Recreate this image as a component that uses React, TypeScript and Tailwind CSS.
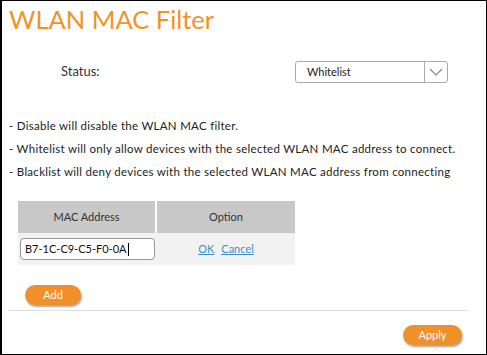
const FONT = "font-['Century_Gothic','Lato','Liberation_Sans',sans-serif]";

export default function App() {
  return (
    <div className={`w-[487px] h-[355px] bg-white border border-black border-l-2 relative overflow-hidden ${FONT}`}>
      <h1 className="pl-[7px] pt-[2px] text-[25.5px] leading-[32px] text-[#f29327]">WLAN MAC Filter</h1>

      {/* Status */}
      <div className="flex items-center mt-[26px] h-[22px]">
        <span className="ml-[59px] text-[13px] text-[#333]">Status:</span>
        <div className="ml-auto mr-[38px] w-[153px] h-[22px] flex border border-[#aaa] rounded-[3px] bg-white">
          <span className="flex-1 pl-[11px] text-[11px] leading-[20px] text-[#222]">Whitelist</span>
          <div className="w-[23px] border-l border-[#aaa] flex items-center justify-center">
            <svg width="14" height="8" viewBox="0 0 14 8" fill="none" stroke="#888" strokeWidth="1.2">
              <path d="M1 1l6 6 6-6" />
            </svg>
          </div>
        </div>
      </div>

      {/* Help text */}
      <div className="mt-[34px] pl-[7px] text-[11.5px] tracking-[0.28px] text-[#222] flex flex-col gap-[6px] leading-[17px]">
        <p>- Disable will disable the WLAN MAC filter.</p>
        <p>- Whitelist will only allow devices with the selected WLAN MAC address to connect.</p>
        <p>- Blacklist will deny devices with the selected WLAN MAC address from connecting</p>
      </div>

      {/* Table */}
      <div className="ml-[16px] mt-[21px] w-[277px]">
        <div className="flex h-[32px] bg-[#c8c8c8] text-[11px] text-[#333]">
          <div className="w-[139px] flex items-center justify-center border-r-2 border-white">MAC Address</div>
          <div className="flex-1 flex items-center justify-center">Option</div>
        </div>
        <div className="flex h-[32px] bg-[#f2f2f2] items-center">
          <div className="w-[139px] pl-[2px]">
            <div className="w-[135px] h-[22px] border border-[#999] rounded-[4px] bg-white pl-[4px] text-[11px] leading-[20px] text-[#111] flex items-center">
              B7-1C-C9-C5-F0-0A<span className="w-px h-[13px] bg-black ml-px" />
            </div>
          </div>
          <div className="flex-1 flex justify-center gap-[7px] text-[11px] text-[#3b8fc6] underline">
            <span>OK</span>
            <span>Cancel</span>
          </div>
        </div>
      </div>

      <div className="ml-[23px] mt-[16px]">
        <button className="w-[56px] h-[20px] rounded-full bg-[#f09029] text-white text-[11px] shadow-[1px_2px_2px_rgba(0,0,0,0.35)]">Add</button>
      </div>

      <div className="ml-[7px] mr-[18px] mt-[5px] border-t border-[#ddd]" />

      <div className="flex justify-end mr-[24px] mt-[14px]">
        <button className="w-[59px] h-[20px] rounded-full bg-[#f09029] text-white text-[11px] shadow-[1px_2px_2px_rgba(0,0,0,0.35)]">Apply</button>
      </div>
    </div>
  );
}
